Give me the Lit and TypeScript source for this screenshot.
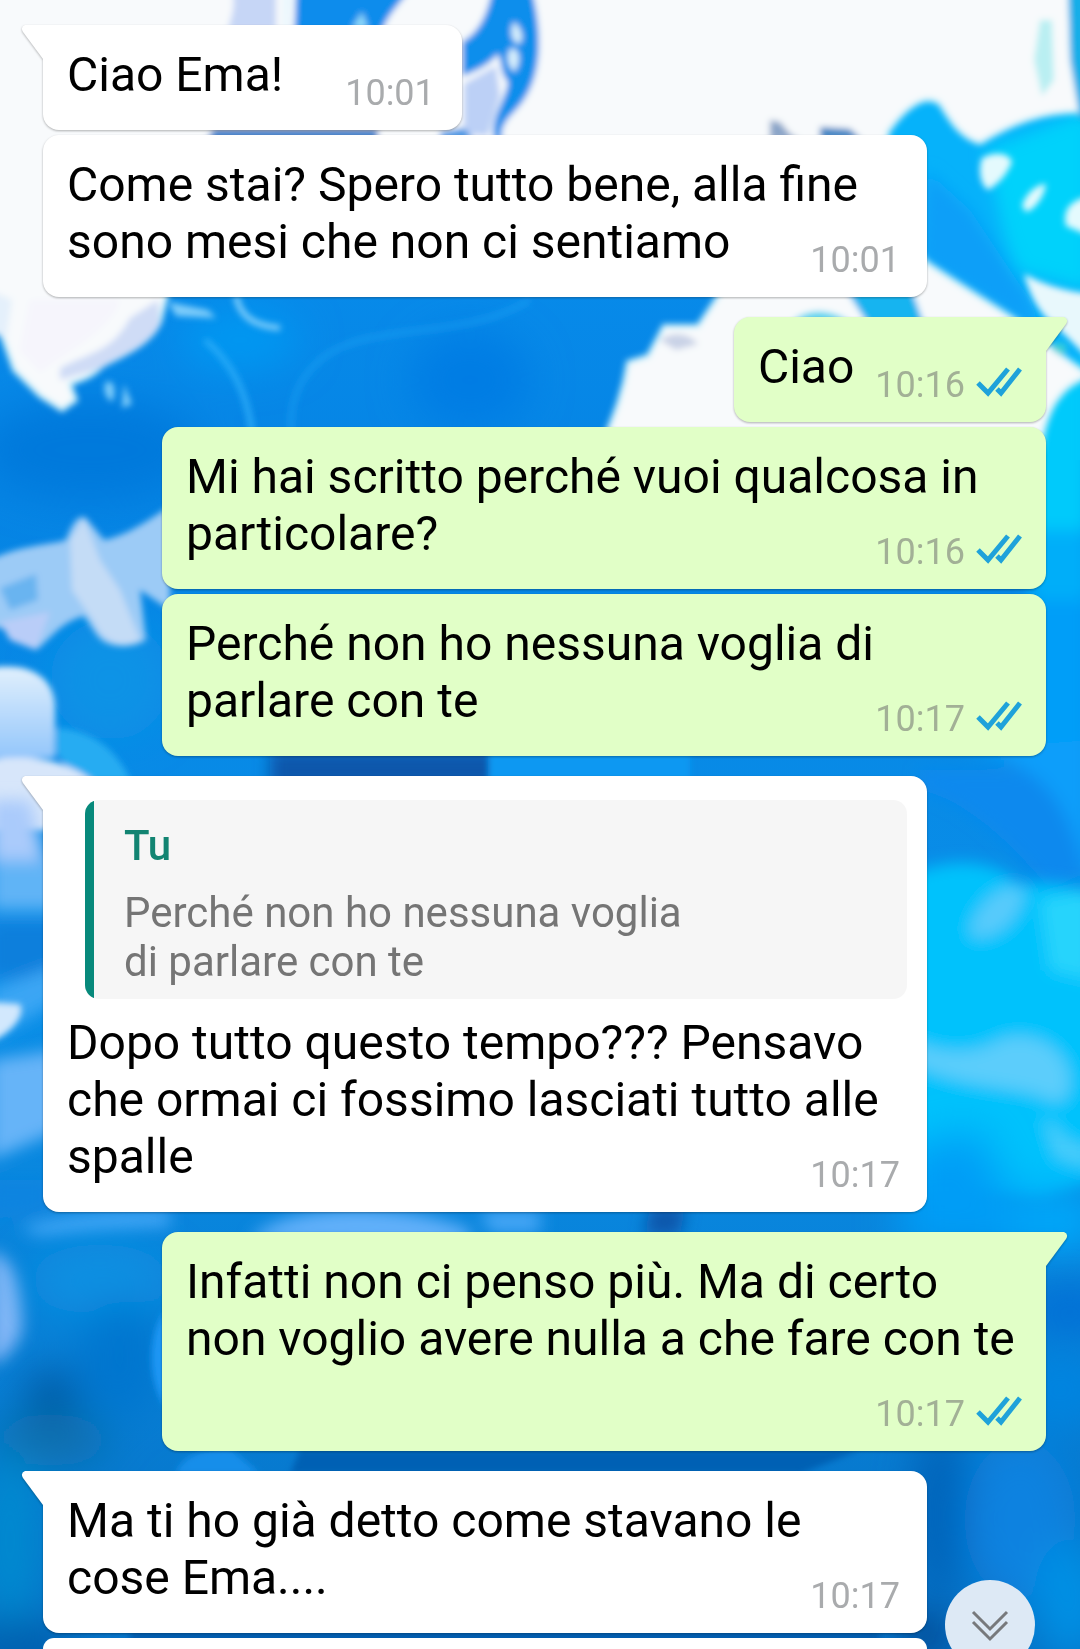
import { LitElement, html, svg, css, nothing } from "lit";
import { customElement, property } from "lit/decorators.js";

interface Quote {
  author: string;
  text: string;
}

interface Message {
  text: string;
  time: string;
  own?: boolean;
  quote?: Quote;
}

const GROUPS: Message[][] = [
  [
    { text: "Ciao Ema!", time: "10:01" },
    { text: "Come stai? Spero tutto bene, alla fine sono mesi che non ci sentiamo", time: "10:01" },
  ],
  [
    { text: "Ciao", time: "10:16", own: true },
    { text: "Mi hai scritto perché vuoi qualcosa in particolare?", time: "10:16", own: true },
    { text: "Perché non ho nessuna voglia di parlare con te", time: "10:17", own: true },
  ],
  [
    {
      text: "Dopo tutto questo tempo??? Pensavo che ormai ci fossimo lasciati tutto alle spalle",
      time: "10:17",
      quote: { author: "Tu", text: "Perché non ho nessuna voglia di parlare con te" },
    },
  ],
  [{ text: "Infatti non ci penso più. Ma di certo non voglio avere nulla a che fare con te", time: "10:17", own: true }],
  [{ text: "Ma ti ho già detto come stavano le cose Ema....", time: "10:17" }],
];

@customElement("chat-wallpaper")
export class ChatWallpaper extends LitElement {
  static styles = css`
    :host {
      display: block;
      overflow: hidden;
    }
    .art {
      display: block;
      width: 100%;
      height: 100%;
    }
  `;

  render() {
    return html`<svg class="art" viewBox="0 0 1080 1649" preserveAspectRatio="none" aria-hidden="true">
      <defs>
        <linearGradient id="sea" x1="0" y1="0" x2="0" y2="1">
          <stop offset="0" stop-color="#0a92f0" />
          <stop offset="0.3" stop-color="#0584e4" />
          <stop offset="0.6" stop-color="#0a8fe8" />
          <stop offset="1" stop-color="#0672c6" />
        </linearGradient>
        <linearGradient id="pearl" x1="0" y1="0" x2="0" y2="1">
          <stop offset="0" stop-color="#e2f0fd" />
          <stop offset="1" stop-color="#93c6fb" />
        </linearGradient>
        <filter id="b2" x="-20%" y="-20%" width="140%" height="140%"><feGaussianBlur stdDeviation="3" /></filter>
        <filter id="b6" x="-30%" y="-30%" width="160%" height="160%"><feGaussianBlur stdDeviation="8" /></filter>
        <filter id="b14" x="-50%" y="-50%" width="200%" height="200%"><feGaussianBlur stdDeviation="20" /></filter>
      </defs>
      <rect width="1080" height="1649" fill="url(#sea)" />
      ${this.rightSide()} ${this.leftSide()} ${this.sky()} ${this.lower()}
    </svg>`;
  }

  private sky() {
    return svg`
      <g filter="url(#b2)">
        <path fill="#f8fafc" stroke="#c4eefa" stroke-width="4" d="M-10-10H1090V112C1040 110 1010 125 980 143C960 138 950 120 940 104C925 92 905 108 888 132L880 200L926 262C990 305 1020 320 1044 342L1090 376C1060 385 1046 410 1040 450H600C610 424 622 400 628 362L648 356L664 326L698 326L722 290H168L160 322C150 345 120 356 102 366C92 378 80 380 70 384L76 400L62 410L40 396L14 370L0 330L-10 330Z" />
        <path fill="#cfdcf6" d="M60 368C90 352 112 352 130 318L158 300L160 325C146 350 118 356 102 368L60 380Z" />
        <path fill="#f6f5fc" d="M30 300H120C110 330 70 350 40 372L20 350Z" />
        <path fill="#e4f0fb" d="M-10 290L12 300L6 340L-10 330Z" />
        <path fill="#0a8cec" d="M296-10H410C396 8 384 18 380 40H294Z" />
        <path fill="#c6d6f6" d="M232-10H276V30H228C232 14 236 6 232-10Z" />
        <path fill="#e4f6fe" d="M284-5H290L288 30H284Z" />
        <path fill="#8fdafa" d="M352 28L362 12L368 28Z" />
        <path fill="#0e8eec" d="M492-10H532C544 40 542 84 514 112C504 122 500 130 502 140H494C490 116 506 100 508 82C500 74 502 62 498 54C488 66 474 72 462 76V42C480 32 488 12 492-10Z" />
        <path fill="#d8f0fc" d="M514 22C524 30 524 42 518 44C510 40 510 28 514 22ZM512 48C522 50 520 66 514 72C506 64 506 52 512 48Z" />
        <path fill="#bcd0f6" d="M464 84L496 66L500 96L488 136L464 134Z" />
        <path fill="#1a78c8" d="M214 129H378V140H206Z" />
        <path fill="#3a94e4" d="M440 132L464 128L474 140H440Z" />
        <path fill="#8aa4c8" d="M770 120L780 122L790 134L800 140H770Z" />
        <path fill="#3b84c4" d="M820 127L850 129L862 140H820Z" />
        <path fill="#13aee8" d="M1068-10H1090V120H1080L1070 60Z" />
        <path fill="#b9eff2" d="M1040 20H1052L1054 80L1042 96L1034 60Z" />
        <path fill="#14b4f0" d="M846 290H912L924 324H868Z" />
        <path fill="#4fd4ee" d="M792 322C806 308 830 308 850 322Z" />
        <path fill="#c9d2e6" d="M660 340C674 330 690 334 698 344L676 350Z" />
        <path fill="#3ccfd8" d="M1058 342L1068 346L1062 356L1050 348Z" />
      </g>`;
  }

  private rightSide() {
    return svg`
      <rect x="870" y="80" width="230" height="380" fill="#06b2fa" />
      <g filter="url(#b6)">
        <path fill="#00d2fb" d="M985 150L1090 110V290L1020 272C1000 240 1000 200 985 150Z" />
        <path fill="#0b9ff8" d="M926 170L970 210L1030 300L1044 336L920 260Z" />
        <path fill="#00cafb" d="M1030 380L1090 360V540L1030 560Z" />
        <path fill="#00aef9" d="M1030 530H1090V620H1030Z" />
        <path fill="#039ef8" d="M1030 600H1090V740L1030 760Z" />
        <path fill="#0789ee" d="M920 790C960 800 1000 830 1050 890L1090 870V770H1046L920 770Z" />
        <path fill="#0a9efa" d="M960 750C1050 760 1070 810 1090 890V740Z" />
      </g>
      <g filter="url(#b2)">
        <path fill="#e4fafd" d="M982 158C996 150 1010 154 1012 162C1006 176 998 184 988 190C980 184 978 170 982 158ZM1022 206C1026 192 1038 184 1046 184C1044 198 1034 210 1026 212ZM1066 226C1062 210 1070 200 1090 196V236Z" />
        <path fill="#e8f8fc" d="M1024 274C1044 284 1060 290 1090 294V360L1060 330C1040 316 1030 296 1024 274Z" />
      </g>
      <g filter="url(#b6)">
        <path fill="#04c2fc" d="M900 880C955 850 1000 865 1020 884C1050 880 1075 886 1100 896V1180L1040 1200L900 1190Z" />
        <path fill="#58cbfb" d="M970 930C980 896 1010 880 1024 890C1020 920 1000 936 975 938Z" />
        <path fill="#26d4fc" d="M1040 900L1090 890V980L1050 970Z" />
        <path fill="#5bcdfb" d="M910 1040C950 1058 980 1052 1000 1040C1030 1030 1060 1045 1068 1070C1074 1096 1060 1106 1050 1100C1020 1084 960 1090 910 1062Z" />
        <path fill="#49cdfb" d="M1044 1120C1056 1118 1064 1150 1090 1145V1170L1056 1158Z" />
      </g>
      <g filter="url(#b14)">
        <path fill="#069df6" d="M900 1150L980 1130L1010 1200L1040 1250H900Z" />
        <path fill="#04a8fa" d="M1010 1190H1100V1250H1010Z" />
      </g>`;
  }

  private leftSide() {
    return svg`
      <g filter="url(#b14)">
        <ellipse cx="90" cy="450" rx="110" ry="50" fill="#0579dc" />
        <ellipse cx="470" cy="380" rx="60" ry="50" fill="#047de4" />
        <ellipse cx="240" cy="340" rx="60" ry="30" fill="#0698f2" />
        <ellipse cx="110" cy="680" rx="60" ry="60" fill="#0b93e6" />
      </g>
      <g fill="none" stroke="#2fb0fa" stroke-width="6" filter="url(#b2)">
        <path d="M205 340C235 365 248 400 252 432" opacity="0.8" />
        <path d="M292 440C286 390 310 350 370 338S480 330 530 300" opacity="0.35" />
        <path d="M236 296C240 318 256 326 280 328" stroke="#7cccfb" />
      </g>
      <g filter="url(#b2)">
        <path fill="#7fcdfb" d="M106 382C116 378 116 396 112 402C106 398 102 390 106 382ZM124 384L132 404L122 408ZM168 302L208 310L216 318L176 316Z" />
        <path fill="#9ccbf6" d="M-10 560C20 545 50 545 66 540C72 524 78 514 86 518L104 540C124 536 140 526 170 506V610L140 590L146 640C130 650 104 648 96 634L84 616C60 622 50 640 36 650C24 636 14 630-10 626Z" />
        <path fill="#c4dcf6" d="M70 540L84 518L100 560L120 590L140 640C122 650 102 642 94 622L72 590Z" />
        <path fill="#b9cdf8" d="M0 622L50 612L36 650L10 640Z" />
        <path fill="#69b4f0" d="M0 588L36 574L38 600L10 610Z" />
        <path fill="url(#pearl)" d="M-10 668C26 662 52 674 55 704V758H-10Z" />
        <path fill="#26acf2" d="M56 728C96 730 124 754 138 800H90L56 752Z" />
        <path fill="#d7e6fa" d="M-10 760C34 752 82 764 100 790L80 830H-10Z" />
      </g>
      <g filter="url(#b6)">
        <path fill="#0756ab" d="M270 750H640V790H270Z" />
        <path fill="#aacbfb" d="M-10 800H30L50 880L-10 900Z" />
        <path fill="#60b4f6" d="M-10 860H60V910H-10Z" />
        <path fill="#0e7fdc" d="M-10 922H60V978H-10Z" />
        <path fill="#3ba6f4" d="M-10 990L60 964V1000L-10 1040Z" />
      </g>
      <path filter="url(#b2)" fill="#0898f2" d="M488 750H690V782H488Z" />`;
  }

  private lower() {
    return svg`
      <g filter="url(#b6)">
        <path fill="#66b4f8" d="M-10 1060L60 1050V1130L-10 1160Z" />
        <path fill="#0a84e0" d="M-10 1180H50V1210L-10 1220Z" />
        <path fill="#46a8f8" d="M20 1228C60 1216 110 1210 170 1212V1226L40 1236Z" />
        <path fill="#62b0fa" d="M250 1240C280 1204 400 1200 470 1230V1246Z" />
        <path fill="#48a8f8" d="M480 1212H540V1232H490Z" />
        <path fill="#0756ab" d="M650 1206H686L680 1236H644Z" />
        <path fill="#80b6f6" d="M-10 1250C14 1260 24 1280 22 1330C16 1350 0 1364-10 1364Z" />
      </g>
      <path filter="url(#b2)" fill="#d2e8fd" d="M-10 1002L20 1004C26 1016 10 1034-10 1042Z" />
      <g filter="url(#b14)">
        <ellipse cx="100" cy="1280" rx="70" ry="36" fill="#0890e2" />
        <ellipse cx="120" cy="1360" rx="40" ry="60" fill="#0576cf" />
        <ellipse cx="52" cy="1395" rx="26" ry="24" fill="#0456a0" />
        <ellipse cx="50" cy="1440" rx="60" ry="26" fill="#086fae" />
        <ellipse cx="10" cy="1540" rx="30" ry="90" fill="#068ad0" />
        <ellipse cx="20" cy="1650" rx="60" ry="30" fill="#055fae" />
        <ellipse cx="1070" cy="1310" rx="50" ry="20" fill="#046cd6" />
        <ellipse cx="1060" cy="1390" rx="50" ry="40" fill="#0684e0" />
        <ellipse cx="940" cy="1510" rx="26" ry="90" fill="#0562b8" />
        <ellipse cx="1020" cy="1520" rx="56" ry="80" fill="#0782e0" />
        <ellipse cx="1070" cy="1600" rx="36" ry="60" fill="#0590e4" />
        <ellipse cx="926" cy="1636" rx="24" ry="24" fill="#043f88" />
      </g>
      <g filter="url(#b2)">
        <path fill="#1d96f4" d="M166 1310C148 1330 146 1380 166 1408Z" />
        <path fill="#158eea" d="M176 1474C180 1458 200 1448 230 1448L260 1474Z" />
        <path fill="#0560b4" d="M300 1450H860L800 1474H290Z" />
        <path fill="#0650a0" d="M130 1634H880V1640H130Z" />
      </g>`;
  }
}

@customElement("chat-bubble")
export class ChatBubble extends LitElement {
  @property({ attribute: false }) message!: Message;
  @property({ type: Boolean }) tail = false;

  static styles = css`
    :host {
      display: flex;
    }
    .bubble {
      position: relative;
      box-sizing: border-box;
      max-width: calc(100% - 119px);
      padding: 21px 24px 27px;
      border-radius: 16px;
      background: #fff;
      color: #000;
      filter: drop-shadow(0 1px 1px rgba(0, 0, 0, 0.3));
    }
    .own {
      margin-left: auto;
      background: #e1ffc7;
    }
    .tailed {
      border-top-left-radius: 0;
    }
    .own.tailed {
      border-top-left-radius: 16px;
      border-top-right-radius: 0;
    }
    .tail {
      position: absolute;
      top: 0;
      left: -22px;
      width: 24px;
      height: 36px;
      fill: #fff;
    }
    .own .tail {
      left: auto;
      right: -22px;
      fill: #e1ffc7;
    }
    .text {
      display: flow-root;
      margin: 0;
      font-size: 48px;
      line-height: 57px;
      overflow-wrap: break-word;
    }
    .meta {
      float: right;
      display: flex;
      align-items: center;
      gap: 11px;
      margin: 26px 3px -11px 62px;
      font-size: 36px;
      line-height: 42px;
      color: #a9abad;
    }
    .own .meta {
      margin-left: 21px;
      margin-right: 0;
      color: #a2b096;
    }
    .ticks {
      width: 46px;
      height: 30px;
      margin-bottom: 6px;
      fill: none;
      stroke: #1fa2da;
      stroke-width: 5;
    }
    .quote {
      margin: 3px -4px 15px 18px;
      padding: 21px 30px 13px 39px;
      border-radius: 14px;
      background: linear-gradient(to right, #07897b 9px, #f6f6f6 9px);
      font-size: 42px;
      line-height: 49px;
      color: #757575;
    }
    .author {
      display: block;
      margin-bottom: 18px;
      font-style: normal;
      font-weight: 500;
      color: #128472;
    }
    .cited {
      max-width: 580px;
      margin: 0;
    }
  `;

  render() {
    const { text, time, own, quote } = this.message;
    return html`<article class="bubble ${own ? "own" : ""} ${this.tail ? "tailed" : ""}">
      ${this.tail
        ? html`<svg class="tail" viewBox="0 0 24 36" aria-hidden="true">
            ${own
              ? svg`<path d="M0 0H20Q25 2 22 7L2 34H0Z" />`
              : svg`<path d="M24 0H4Q-1 2 2 7L22 34H24Z" />`}
          </svg>`
        : nothing}
      ${quote
        ? html`<blockquote class="quote">
            <cite class="author">${quote.author}</cite>
            <p class="cited">${quote.text}</p>
          </blockquote>`
        : nothing}
      <p class="text">${text}<span class="meta"><time>${time}</time>${own
          ? html`<svg class="ticks" viewBox="0 0 46 30" role="img" aria-label="Letto">
              <path d="M2 16L12 26L32 2" />
              <path d="M21 22L25 26L44 2" />
            </svg>`
          : nothing}</span></p>
    </article>`;
  }
}

@customElement("app-root")
export class AppRoot extends LitElement {
  static styles = css`
    :host {
      display: block;
      font-family: Roboto, "Noto Sans", sans-serif;
    }
    .screen {
      position: relative;
      display: flex;
      min-height: 100vh;
      overflow: hidden;
    }
    .wallpaper {
      position: absolute;
      inset: 0;
    }
    .chat {
      position: relative;
      flex: 1;
      min-width: 0;
      display: flex;
      flex-direction: column;
      gap: 20px;
      padding: 25px 34px 0 43px;
    }
    .group {
      display: flex;
      flex-direction: column;
      gap: 5px;
    }
    .last {
      flex: 1;
    }
    .next {
      flex: 1;
      min-height: 11px;
      margin-right: 119px;
      border-radius: 16px 16px 0 0;
      background: #fff;
    }
    .jump {
      position: absolute;
      right: 45px;
      bottom: -21px;
      width: 90px;
      height: 90px;
      padding: 0;
      border: 0;
      border-radius: 50%;
      background: #dde9f5;
    }
    .chevrons {
      display: block;
      width: 90px;
      height: 90px;
      fill: none;
      stroke: #77797c;
      stroke-width: 3;
    }
  `;

  render() {
    return html`<main class="screen">
      <chat-wallpaper class="wallpaper"></chat-wallpaper>
      <div class="chat">
        ${GROUPS.map((group, g) => {
          const last = g === GROUPS.length - 1;
          return html`<section class="group ${last ? "last" : ""}">
            ${group.map((m, i) => html`<chat-bubble .message=${m} ?tail=${i === 0}></chat-bubble>`)}
            ${last ? html`<div class="next"></div>` : nothing}
          </section>`;
        })}
      </div>
      <button class="jump" type="button" aria-label="Vai in fondo">
        <svg class="chevrons" viewBox="0 0 90 90" aria-hidden="true">
          <path d="M28 32L45 49L62 32" />
          <path d="M28 42L45 59L62 42" />
        </svg>
      </button>
    </main>`;
  }
}
